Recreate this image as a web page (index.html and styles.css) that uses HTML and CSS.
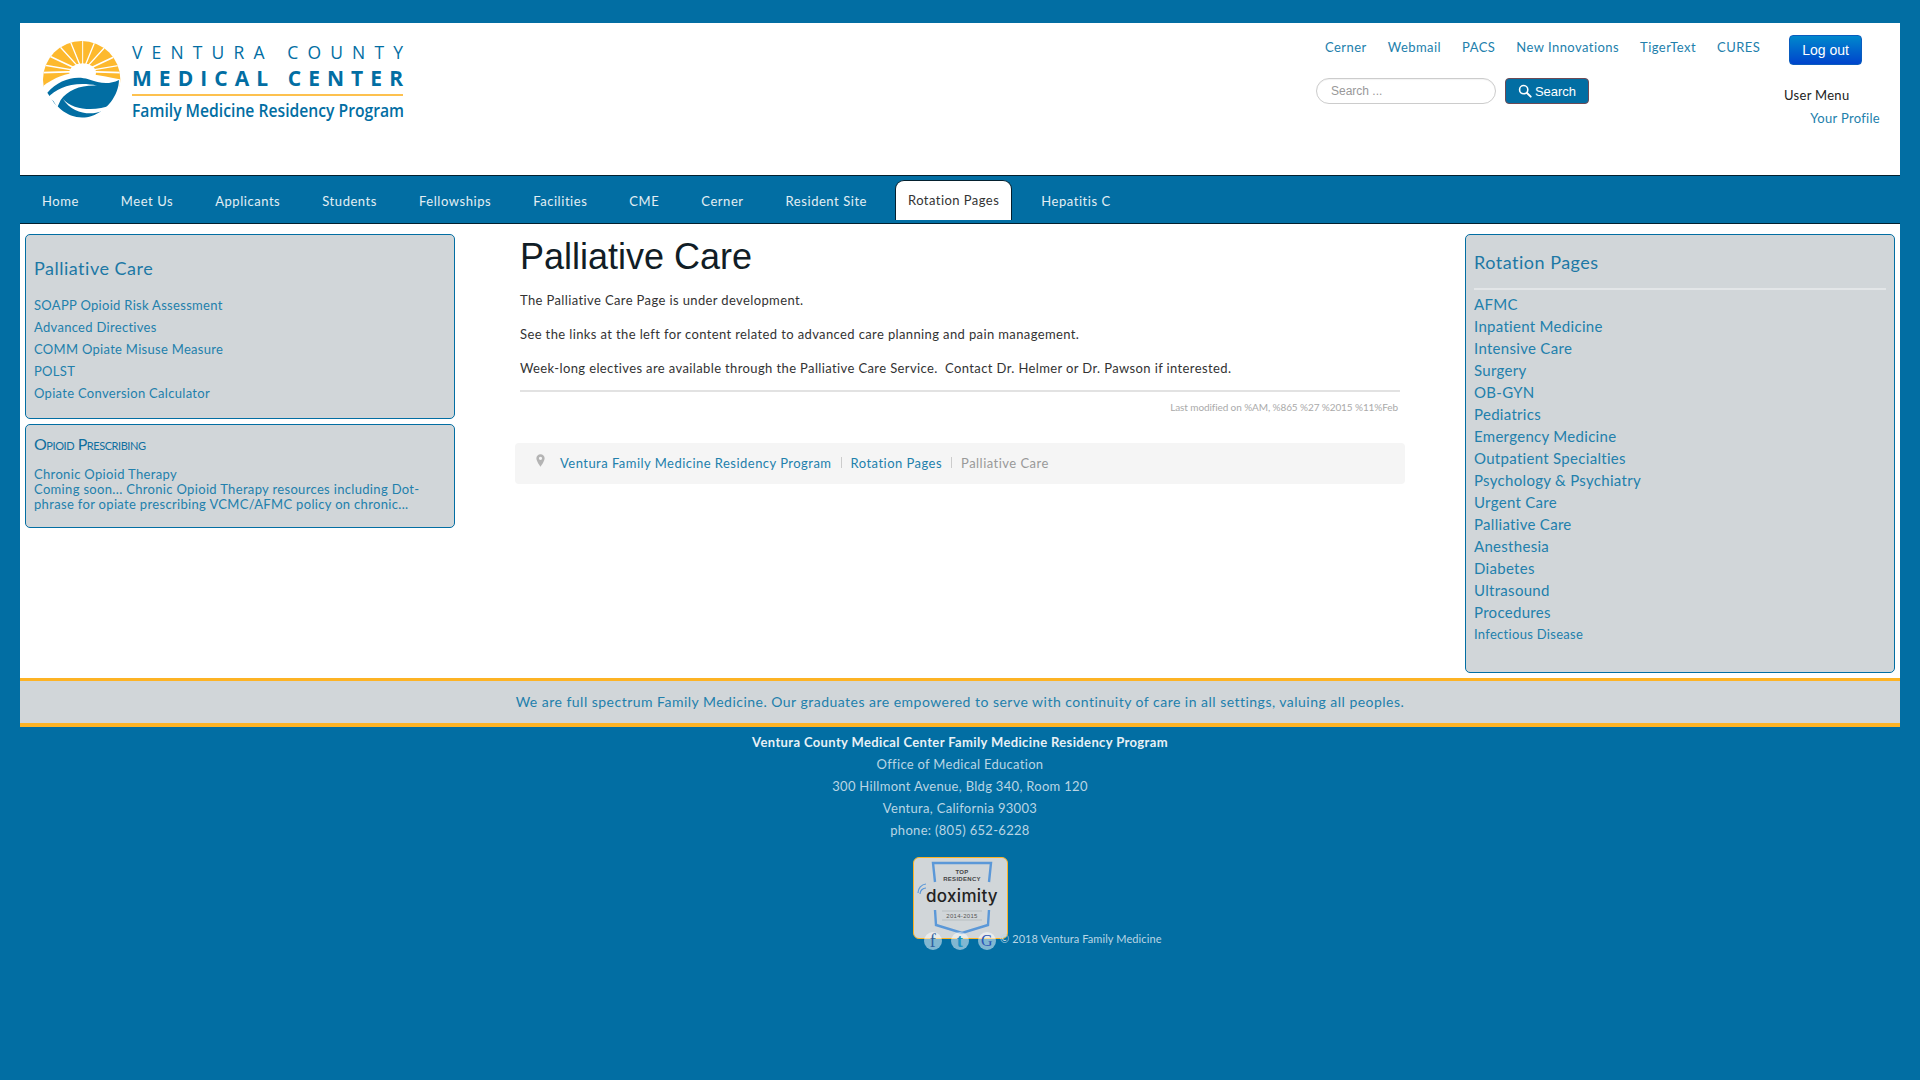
FILE: index.html
```html
<!DOCTYPE html>
<html lang="en">
<head>
<meta charset="utf-8">
<title>Palliative Care</title>
<link rel="stylesheet" href="styles.css">
</head>
<body>
<header class="head">
  <svg class="logo" viewBox="0 0 410 90" width="410" height="90" role="img" aria-label="Ventura County Medical Center">
    <defs><clipPath id="disc"><circle cx="185" cy="179" r="116"/></clipPath></defs>
    <g transform="translate(-20,-16) scale(0.33333)">
      <g clip-path="url(#disc)">
        <rect x="60" y="50" width="250" height="150" fill="#fdb92e"/>
        <g stroke="#fff" fill="none">
          <path d="M188 155 L188 55" stroke-width="3"/>
          <path d="M188 155 L150 62M188 155 L226 62" stroke-width="4"/>
          <path d="M188 155 L118 78M188 155 L258 78" stroke-width="4"/>
          <path d="M188 155 L88 108M188 155 L288 108" stroke-width="5"/>
          <path d="M188 155 L70 135M188 155 L306 135" stroke-width="4"/>
          <path d="M170 155 L60 158M206 155 L310 158" stroke-width="5"/>
        </g>
        <ellipse cx="188" cy="158" rx="40" ry="28" fill="#fff"/>
        <path d="M60 205 C110 165 150 155 190 160 C230 165 260 170 310 180 L310 215 L60 215Z" fill="#fff"/>
      </g>
      <path d="M82 218 C115 180 165 165 205 178 C240 190 265 195 297 180 C296 225 262 272 215 288 C185 298 150 292 122 268 L103 250 L82 218Z" fill="#026ea3"/>
      <path d="M84 232 C110 205 160 182 232 197 C180 195 145 210 122 240 L112 262 L100 243Z" fill="#fff"/>
      <path d="M128 236 C160 272 225 274 274 256 C240 290 165 292 128 236Z" fill="#fff"/>
    </g>
    <text class="logo-a" x="92" y="23" textLength="271" lengthAdjust="spacing">VENTURA COUNTY</text>
    <text class="logo-b" x="92" y="50" textLength="271" lengthAdjust="spacing">MEDICAL CENTER</text>
    <rect x="92" y="58" width="271" height="2" fill="#fdc14f"/>
    <text class="logo-c" x="92" y="81" textLength="272" lengthAdjust="spacingAndGlyphs">Family Medicine Residency Program</text>
  </svg>
  <div class="tools">
    <div class="tools-main">
      <nav class="toplinks">
        <a href="#">Cerner</a><a href="#">Webmail</a><a href="#">PACS</a><a href="#">New Innovations</a><a href="#">TigerText</a><a href="#">CURES</a>
      </nav>
      <form class="search">
        <input class="search-input" type="text" placeholder="Search ...">
        <button class="search-btn" type="button">
          <svg viewBox="0 0 16 16" width="14" height="14"><circle cx="6.5" cy="6.5" r="4.7" fill="none" stroke="#fff" stroke-width="1.8"/><path d="M10 10l4.5 4.5" stroke="#fff" stroke-width="2.2" stroke-linecap="round"/></svg>
          Search
        </button>
      </form>
    </div>
    <div class="user">
      <button class="logout" type="button">Log out</button>
      <div class="user-title">User Menu</div>
      <a class="user-link" href="#">Your Profile</a>
    </div>
  </div>
</header>

<nav class="mainnav">
  <a href="#">Home</a><a href="#">Meet Us</a><a href="#">Applicants</a><a href="#">Students</a><a href="#">Fellowships</a><a href="#">Facilities</a><a href="#">CME</a><a href="#">Cerner</a><a href="#">Resident Site</a><a class="active" href="#">Rotation Pages</a><a href="#">Hepatitis C</a>
</nav>

<main class="content">
  <aside class="col">
    <section class="panel panel-a">
      <h3 class="panel-title">Palliative Care</h3>
      <ul class="list small">
        <li><a href="#">SOAPP Opioid Risk Assessment</a></li>
        <li><a href="#">Advanced Directives</a></li>
        <li><a href="#">COMM Opiate Misuse Measure</a></li>
        <li><a href="#">POLST</a></li>
        <li><a href="#">Opiate Conversion Calculator</a></li>
      </ul>
    </section>
    <section class="panel panel-b">
      <h3 class="caps-title">Opioid Prescribing</h3>
      <p class="teaser"><a href="#">Chronic Opioid Therapy</a><br>Coming soon... Chronic Opioid Therapy resources including Dot-<br>phrase for opiate prescribing VCMC/AFMC policy on chronic...</p>
    </section>
  </aside>

  <article class="article">
    <div class="article-body">
      <h1>Palliative Care</h1>
      <p>The Palliative Care Page is under development.</p>
      <p>See the links at the left for content related to advanced care planning and pain management.</p>
      <p>Week-long electives are available through the Palliative Care Service.&nbsp; Contact Dr. Helmer or Dr. Pawson if interested.</p>
      <hr class="rule">
      <div class="modified">Last modified on %AM, %865 %27 %2015 %11%Feb</div>
    </div>
    <div class="crumbs">
      <svg class="pin" viewBox="0 0 10 14" width="9" height="13"><path d="M5 0a4.6 4.6 0 0 0-4.6 4.6C.4 8 5 14 5 14s4.6-6 4.6-9.4A4.6 4.6 0 0 0 5 0zm0 6.4a1.8 1.8 0 1 1 0-3.6 1.8 1.8 0 0 1 0 3.6z" fill="#b4b4b4"/></svg>
      <a href="#">Ventura Family Medicine Residency Program</a><span class="sep"></span><a href="#">Rotation Pages</a><span class="sep"></span><span class="here">Palliative Care</span>
    </div>
  </article>

  <aside class="col">
    <section class="panel panel-c">
      <h3 class="panel-title">Rotation Pages</h3>
      <hr class="panel-rule">
      <ul class="list large">
        <li><a href="#">AFMC</a></li>
        <li><a href="#">Inpatient Medicine</a></li>
        <li><a href="#">Intensive Care</a></li>
        <li><a href="#">Surgery</a></li>
        <li><a href="#">OB-GYN</a></li>
        <li><a href="#">Pediatrics</a></li>
        <li><a href="#">Emergency Medicine</a></li>
        <li><a href="#">Outpatient Specialties</a></li>
        <li><a href="#">Psychology &amp; Psychiatry</a></li>
        <li><a href="#">Urgent Care</a></li>
        <li><a href="#">Palliative Care</a></li>
        <li><a href="#">Anesthesia</a></li>
        <li><a href="#">Diabetes</a></li>
        <li><a href="#">Ultrasound</a></li>
        <li><a href="#">Procedures</a></li>
        <li class="minor"><a href="#">Infectious Disease</a></li>
      </ul>
    </section>
  </aside>
</main>

<div class="band">We are full spectrum Family Medicine. Our graduates are empowered to serve with continuity of care in all settings, valuing all peoples.</div>

<footer class="foot">
  <strong>Ventura County Medical Center Family Medicine Residency Program</strong>
  <span>Office of Medical Education</span>
  <span>300 Hillmont Avenue, Bldg 340, Room 120</span>
  <span>Ventura, California 93003</span>
  <span>phone: (805) 652-6228</span>
  <div class="badge">
    <svg viewBox="0 0 95 82" width="95" height="82" role="img" aria-label="Doximity top residency 2014-2015">
      <path d="M22 25 L20 6 L78 6 L76 25" fill="none" stroke="#5b98d8" stroke-width="2.4"/>
      <path d="M22 53 L23 68 L49 76 L75 68 L76 53" fill="none" stroke="#5b98d8" stroke-width="2.4"/>
      <text class="b-small" x="49" y="17" text-anchor="middle">TOP</text>
      <text class="b-small" x="49" y="24" text-anchor="middle">RESIDENCY</text>
      <text class="b-big" x="49" y="45" text-anchor="middle">doximity</text>
      <path d="M7 37a6 6 0 0 1 6-6M5 36a9 9 0 0 1 8-9" fill="none" stroke="#5b98d8" stroke-width="1.2"/>
      <path d="M29 54H69M29 63H69" stroke="#aab0b4" stroke-width=".6"/>
      <text class="b-year" x="49" y="61" text-anchor="middle">2014-2015</text>
    </svg>
  </div>
  <div class="social">
    <span class="soc soc-f">f</span><span class="soc soc-t">t</span><span class="soc soc-g">G</span>
    <span class="copy">© 2018 Ventura Family Medicine</span>
  </div>
</footer>
</body>
</html>
```

FILE: styles.css
```css
* { box-sizing: border-box; }
html, body { margin: 0; }
body {
  min-height: 1080px;
  padding: 23px 20px 0;
  background: #026ea3;
  font-family: Lato, "Open Sans", sans-serif;
  font-size: 13px;
  color: #333;
  overflow: hidden;
}
a { color: #2280ac; text-decoration: none; }

/* header */
.head {
  display: flex;
  height: 153px;
  background: #fff;
  border-bottom: 1px solid #04202e;
}
.logo { flex: none; margin: 13px 0 0 20px; }
.logo-a { font: 400 17.5px "Open Sans", sans-serif; fill: #026ea3; }
.logo-b { font: 700 21px "Open Sans", sans-serif; fill: #026ea3; }
.logo-c { font: 600 18px "Open Sans", sans-serif; fill: #026ea3; }
.tools { display: flex; margin-left: auto; }
.tools-main { width: 468px; }
.toplinks { display: flex; gap: 21px; padding: 16px 0 0 9px; line-height: 16px; letter-spacing: .45px; }
.search { display: flex; gap: 9px; margin-top: 23px; }
.search-input {
  width: 180px; height: 26px; padding: 0 14px;
  border: 1px solid #ccc; border-radius: 13px;
  font: 12px "Liberation Sans", sans-serif;
  box-shadow: inset 0 1px 1px rgba(0,0,0,.05);
}
.search-input::placeholder { color: #999; opacity: 1; }
.search-btn {
  display: flex; align-items: center; justify-content: center; gap: 3px;
  width: 84px; height: 26px; padding: 0;
  background: #026ea3; color: #fff;
  border: 1px solid #6e4a55; border-radius: 4px;
  font: 13px "Liberation Sans", sans-serif;
}
.user { width: 116px; padding-top: 12px; }
.logout {
  display: block; width: 73px; height: 30px; margin-left: 5px; padding: 0;
  color: #fff; border: 1px solid #0a5cbe; border-radius: 4px;
  background: linear-gradient(#0088cc, #0044cc);
  font: 14px "Liberation Sans", sans-serif;
}
.user-title { margin-top: 20px; line-height: 20px; color: #222; letter-spacing: .3px; }
.user-link { display: block; margin-top: 3px; padding-right: 20px; text-align: right; line-height: 20px; letter-spacing: .3px; }

/* nav */
.mainnav {
  display: flex; align-items: center; gap: 42px;
  height: 48px; padding: 2px 0 0 22px;
  border-bottom: 1px solid #04202e;
  letter-spacing: .55px;
}
.mainnav a { color: #e3eef4; line-height: 18px; }
.mainnav .active {
  display: block; align-self: flex-end; height: 40px; margin: 0 -13px 3px -14px; padding: 10px 12px 0;
  color: #333; background: #fff;
  border: 1px solid #04202e; border-bottom: 0; border-radius: 9px 9px 0 0;
  letter-spacing: .45px;
}

/* content */
.content {
  display: grid; grid-template-columns: 430px 1fr 430px;
  height: 454px; padding: 10px 5px 6px;
  background: #fff;
}
.panel {
  margin-bottom: 5px; padding: 0 8px;
  background: #d1d6d9;
  border: 1px solid #026ea3; border-radius: 5px;
  color: #2280ac;
}
.panel-a { height: 185px; padding-top: 21px; }
.panel-b { height: 104px; padding-top: 9px; }
.panel-c { height: 439px; padding-top: 15px; }
.panel-title { margin: 0; font-weight: 400; font-size: 18px; line-height: 24px; color: #1c78a5; letter-spacing: .5px; }
.panel-a .list.small { margin-top: 14px; }
.caps-title { margin: 0; font-weight: 400; font-size: 16px; line-height: 20px; font-variant: small-caps; color: #0f6f9f; letter-spacing: -.45px; }
.teaser { margin: 13px 0 0; line-height: 15px; letter-spacing: .33px; }
.list { margin: 0; padding: 0; list-style: none; line-height: 22px; }
.list.small { letter-spacing: .3px; }
.list.large { margin-top: 3px; font-size: 15px; letter-spacing: .3px; }
.list .minor { font-size: 13px; }
.panel-rule { height: 2px; margin: 14px 0 0; background: #e3e6e8; border: 0; }

.article { padding: 0 60px; }
.article-body { padding: 0 5px; }
h1 { margin: 0 0 12px; padding-top: 2px; font: 400 36px/42px "Liberation Sans", sans-serif; color: #111d26; }
.article p { margin: 0 0 14px; line-height: 20px; color: #333; letter-spacing: .38px; }
.rule { height: 2px; margin: -2px 0 0; background: #e2e2e2; border: 0; }
.modified { margin-top: 8px; padding-right: 2px; text-align: right; font-size: 10px; line-height: 14px; color: #aaa; letter-spacing: -.1px; }
.crumbs {
  display: flex; align-items: center; height: 41px; margin-top: 29px; padding: 0 0 2px 21px;
  background: #f5f5f5; border-radius: 4px; letter-spacing: .47px;
}
.pin { margin: -4px 15px 0 0; }
.sep { width: 1px; height: 11px; margin: 0 9px; background: #ccc; }
.here { color: #999; }

/* band */
.band {
  height: 49px;
  background: #d1d6d9;
  border-top: 3px solid #fdb324; border-bottom: 4px solid #fdb324;
  text-align: center; font-size: 14px; line-height: 42px; color: #2280ac; letter-spacing: .48px;
}

/* footer */
.foot { display: flex; flex-direction: column; align-items: center; padding-top: 4px; line-height: 22px; color: #b9d5e4; letter-spacing: .3px; }
.foot strong { color: #e8f1f6; font-weight: 700; letter-spacing: .37px; }
.badge {
  width: 95px; height: 82px; margin-top: 16px;
  background: #d1d6d9; border: 1px solid #fdb324; border-radius: 6px; overflow: hidden;
}
.badge svg { display: block; margin: -1px; }
.b-small { font: 700 6px "Liberation Sans", sans-serif; fill: #444; letter-spacing: .3px; }
.b-big { font: 500 17px Inter, sans-serif; fill: #222; }
.b-year { font: 6px "Liberation Sans", sans-serif; fill: #555; letter-spacing: .3px; }
.social { position: relative; display: flex; align-items: center; gap: 9px; align-self: flex-start; margin: -7px 0 0 904px; }
.soc {
  width: 18px; height: 18px; border-radius: 50%;
  background: rgba(255,255,255,.5);
  text-align: center; font: 400 18px/18px "Liberation Serif", serif;
}
.soc-f { color: #2f5f9e; }
.soc-t { color: #1c93c4; font-weight: 700; }
.soc-g { color: #2b55b5; font-size: 16px; }
.copy { margin: -4px 0 0 -5px; font-size: 11px; letter-spacing: .1px; color: #b9d5e4; }
```
